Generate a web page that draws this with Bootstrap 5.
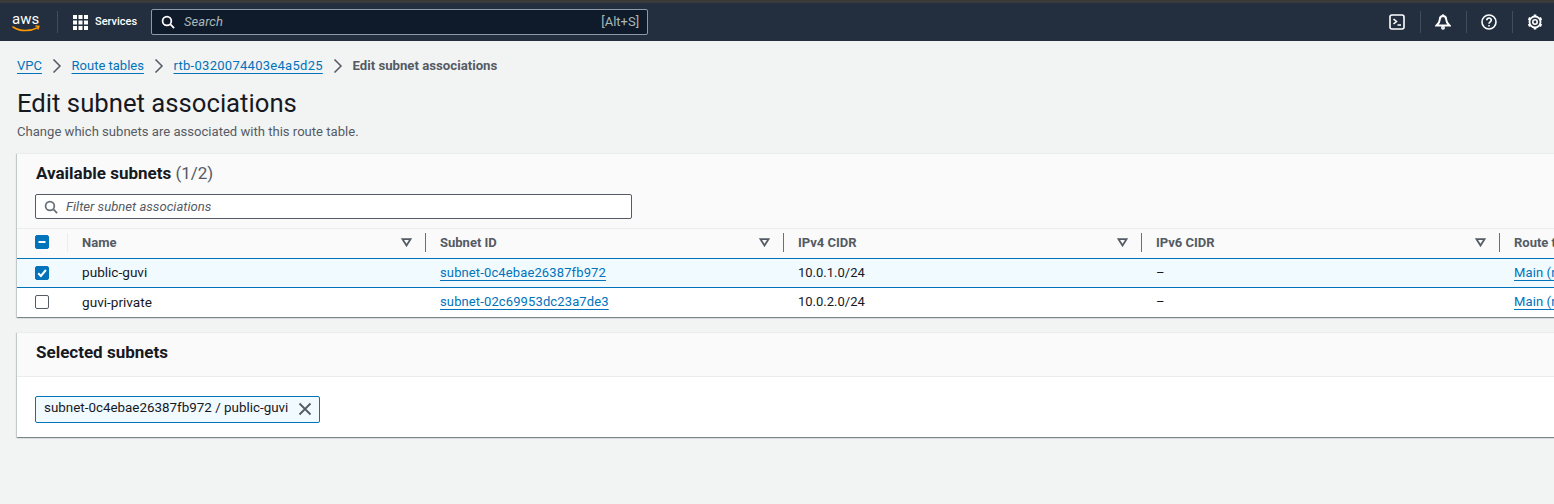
<!DOCTYPE html>
<html lang="en">
<head>
    <meta charset="UTF-8">
    <title>Edit subnet associations</title>
    <link href="https://cdn.jsdelivr.net/npm/bootstrap@5.3.2/dist/css/bootstrap.min.css" rel="stylesheet">
    <style>
        html, body { height: 100%; overflow: hidden; }
        body { background: #f2f3f3; font-family: Roboto, sans-serif; font-size: 13px; color: #16191f; }
        a { color: #0073bb; }

        .top-strip { height: 3px; background: #3a3a3a; }
        .aws-nav { height: 38px; background: #232f3e; padding: 0 9px 0 12px; flex-wrap: nowrap; }
        .aws-logo { width: 29px; height: 24px; }
        .nav-sep { width: 1px; height: 22px; background: #414d5c; }
        .svc-btn { color: #fff; font-size: 11px; font-weight: 500; gap: 7px; margin: 0 14px 0 15px; }
        .grid-icon { width: 15px; height: 15px; }
        .top-search { width: 497px; height: 26px; background: #0f1b2a; border: 1px solid #8d99a8; border-radius: 2px; padding: 0 8px 0 9px; color: #aab7b8; }
        .top-search em { margin-left: 9px; }
        .nav-icons { margin-left: auto; }
        .nav-icons .sep { width: 1px; height: 22px; background: #414d5c; }
        .nav-icons svg { width: 16px; height: 16px; margin: 0 14.5px; }
        .nav-icons svg:last-child { margin-right: 2px; }

        .page-body { padding: 0 0 0 17px; }
        .crumbs { margin: 16px 0 0; height: 18px; align-items: center; }
        .crumbs a { text-decoration-thickness: 1px; text-underline-offset: 3px; }
        .crumbs svg { width: 14px; height: 14px; margin: 0 7.8px; }
        .crumbs .id-link { letter-spacing: .28px; }
        .crumb-now { color: #545b64; font-weight: 700; font-size: 13.2px; }
        .page-title { font-size: 25.7px; font-weight: 400; line-height: 30px; margin: 13px 0 0; color: #16191f; }
        .page-sub { color: #545b64; line-height: 16px; margin: 6px 0 0; font-size: 13.08px; }

        .aws-card { width: 1600px; border: 0; border-top: 1px solid #eaeded; border-radius: 0; box-shadow: 0 1px 1px 0 rgba(0,28,36,.3), 1px 1px 1px 0 rgba(0,28,36,.15), -1px 1px 1px 0 rgba(0,28,36,.15); background: #fff; }
        .subnets-card { margin-top: 13px; height: 164px; }
        .selected-card { margin-top: 15px; height: 105px; }
        .aws-head { background: #fafafa; border-bottom: 1px solid #eaeded; border-radius: 0 !important; padding: 0 18px; }
        .subnets-card .aws-head { height: 75px; padding-top: 9px; }
        .selected-card .aws-head { height: 44px; display: flex; align-items: center; padding-bottom: 6px; }
        .card-name { font-size: 17px; font-weight: 700; line-height: 20px; margin-left: 1px; }
        .card-name span { font-weight: 400; color: #545b64; }
        .filter-box { width: 597px; height: 25px; margin-top: 11px; background: #fff; border: 1px solid #545b64; border-radius: 2px; padding: 0 8px; color: #545b64; font-size: 13.1px; }
        .filter-box em { margin-left: 8px; }

        .subnet-table { table-layout: fixed; width: 1600px; margin: 0; font-size: 13px; }
        .subnet-table th, .subnet-table td { padding: 0 0 0 15px; vertical-align: middle; border: 0; white-space: nowrap; }
        .subnet-table thead th { height: 29px; background: #fafafa; color: #545b64; font-weight: 700; padding-bottom: 2px; }
        .subnet-table tbody td { height: 29px; color: #16191f; }
        .subnet-table tr.row-selected td { background: #f1faff; border-top: 1px solid #0073bb; border-bottom: 1px solid #0073bb; }
        .subnet-table .col-check { width: 50px; padding-left: 18px; }
        .subnet-table .col-data { width: 358px; }
        .subnet-table a { text-underline-offset: 3px; letter-spacing: .125px; }
        .subnet-table .name-cell { font-size: 13.6px; }
        .head-cell { height: 19px; padding-right: 13px; }
        .head-cell svg { width: 11px; height: 9px; }
        .head-divider { border-left: 1px solid #687078; height: 19px; margin-left: -15px; padding-left: 14px; }
        .first-divider { border-left: 1px solid #eaeded; height: 19px; margin-left: -15px; padding-left: 14px; }

        .tick { width: 14px; height: 14px; margin: 0; display: block; border: 1px solid #545b64; border-radius: 2px; background: #fff; }
        .tick.on { background: #0073bb; border-color: #0073bb; }
        .tick svg { display: block; width: 12px; height: 12px; }

        .chip { margin: 19px 0 0 18px; width: 285px; height: 27px; border: 1px solid #0073bb; border-radius: 2px; background: #f1faff; padding: 0 7px 2px 8px; font-size: 13.4px; }
        .chip svg { width: 14px; height: 14px; }
    </style>
</head>
<body>

<div class="top-strip"></div>

<nav class="navbar aws-nav d-flex align-items-center">
    <svg class="aws-logo" viewBox="0 0 29 24">
        <text x="0" y="14" fill="#fff" font-family="Roboto, sans-serif" font-size="15">aws</text>
        <path d="M1 17c7 4.600 17 4.600 25 .6" fill="none" stroke="#ff9900" stroke-width="1.600" stroke-linecap="round"/>
        <path d="M23.500 16l3.500.4-1.200 3.200" fill="none" stroke="#ff9900" stroke-width="1.300"/>
    </svg>
    <div class="nav-sep ms-3"></div>
    <div class="svc-btn d-flex align-items-center">
        <svg class="grid-icon" viewBox="0 0 15 15" fill="#fff">
            <rect x="0" y="0" width="4" height="4"/><rect x="5.500" y="0" width="4" height="4"/><rect x="11" y="0" width="4" height="4"/>
            <rect x="0" y="5.500" width="4" height="4"/><rect x="5.500" y="5.500" width="4" height="4"/><rect x="11" y="5.500" width="4" height="4"/>
            <rect x="0" y="11" width="4" height="4"/><rect x="5.500" y="11" width="4" height="4"/><rect x="11" y="11" width="4" height="4"/>
        </svg>
        <span>Services</span>
    </div>
    <div class="top-search d-flex align-items-center">
        <svg width="14" height="14" viewBox="0 0 16 16" fill="none" stroke="#fff" stroke-width="2"><circle cx="6.800" cy="6.800" r="5"/><path d="M10.500 10.500L15 15"/></svg>
        <em>Search</em>
        <span class="ms-auto">[Alt+S]</span>
    </div>
    <div class="nav-icons d-flex align-items-center">
        <svg viewBox="0 0 16 16" fill="none" stroke="#fff" stroke-width="1.600"><rect x="1" y="1" width="14" height="14" rx="2"/><path d="M4.500 5l3 2.500-3 2.500M8.500 11h3.500"/></svg>
        <div class="sep"></div>
        <svg viewBox="0 0 16 16" fill="none" stroke="#fff" stroke-width="2"><path d="M8 2c-2 0-3.200 1.500-3.200 3.600 0 2.300-1 3.800-3.300 5.900h13c-2.300-2.100-3.300-3.600-3.300-5.900C11.200 3.500 10 2 8 2z"/><path d="M8 .3v1.500" stroke-width="1.600"/><circle cx="8" cy="13.800" r="1.200" stroke-width="1.500"/></svg>
        <div class="sep"></div>
        <svg viewBox="0 0 16 16" fill="none" stroke="#fff" stroke-width="1.600"><circle cx="8" cy="8" r="7"/><path d="M5.800 6.300c0-3 4.500-3 4.500-.2 0 1.700-2.300 1.700-2.300 3.600"/><path d="M8 11v1.500"/></svg>
        <div class="sep"></div>
        <svg viewBox="0 0 16 16" fill="none" stroke="#fff"><circle cx="8" cy="8" r="2.200" stroke-width="1.600"/><circle cx="8" cy="8" r="5.500" stroke-width="1.800"/><path d="M8 .5v2.500M8 13v2.500M1.500 4.250l2.200 1.250M12.300 10.500l2.200 1.250M1.500 11.750l2.200-1.250M12.300 5.500l2.200-1.250" stroke-width="2.600"/></svg>
    </div>
</nav>

<div class="page-body">
    <div class="crumbs d-flex">
        <a href="#">VPC</a>
        <svg viewBox="0 0 14 14" fill="none" stroke="#545b64" stroke-width="1.500"><path d="M3.500 .5L10 7l-6.500 6.500"/></svg>
        <a href="#">Route tables</a>
        <svg viewBox="0 0 14 14" fill="none" stroke="#545b64" stroke-width="1.500"><path d="M3.500 .5L10 7l-6.500 6.500"/></svg>
        <a class="id-link" href="#">rtb-0320074403e4a5d25</a>
        <svg viewBox="0 0 14 14" fill="none" stroke="#545b64" stroke-width="1.500"><path d="M3.500 .5L10 7l-6.500 6.500"/></svg>
        <span class="crumb-now">Edit subnet associations</span>
    </div>

    <h1 class="page-title">Edit subnet associations</h1>
    <p class="page-sub">Change which subnets are associated with this route table.</p>

    <div class="card aws-card subnets-card">
        <div class="card-header aws-head">
            <div class="card-name">Available subnets <span>(1/2)</span></div>
            <div class="filter-box d-flex align-items-center">
                <svg width="14" height="14" viewBox="0 0 16 16" fill="none" stroke="#687078" stroke-width="2"><circle cx="6.800" cy="6.800" r="5"/><path d="M10.500 10.500L15 15"/></svg>
                <em>Filter subnet associations</em>
            </div>
        </div>
        <table class="table subnet-table">
            <thead>
            <tr>
                <th class="col-check"><div class="tick on"><svg viewBox="0 0 12 12"><path d="M2.500 6h7" stroke="#fff" stroke-width="2"/></svg></div></th>
                <th class="col-data"><div class="first-divider head-cell d-flex align-items-center justify-content-between">Name<svg viewBox="0 0 11 9" fill="none" stroke="#545b64" stroke-width="1.800"><path d="M1.500 1.200h8L5.500 7.500z"/></svg></div></th>
                <th class="col-data"><div class="head-divider head-cell d-flex align-items-center justify-content-between">Subnet ID<svg viewBox="0 0 11 9" fill="none" stroke="#545b64" stroke-width="1.800"><path d="M1.500 1.200h8L5.500 7.500z"/></svg></div></th>
                <th class="col-data"><div class="head-divider head-cell d-flex align-items-center justify-content-between">IPv4 CIDR<svg viewBox="0 0 11 9" fill="none" stroke="#545b64" stroke-width="1.800"><path d="M1.500 1.200h8L5.500 7.500z"/></svg></div></th>
                <th class="col-data"><div class="head-divider head-cell d-flex align-items-center justify-content-between">IPv6 CIDR<svg viewBox="0 0 11 9" fill="none" stroke="#545b64" stroke-width="1.800"><path d="M1.500 1.200h8L5.500 7.500z"/></svg></div></th>
                <th><div class="head-divider head-cell d-flex align-items-center">Route table</div></th>
            </tr>
            </thead>
            <tbody>
            <tr class="row-selected">
                <td class="col-check"><div class="tick on"><svg viewBox="0 0 12 12" fill="none"><path d="M2.200 6.200l2.700 2.800 5-6" stroke="#fff" stroke-width="2"/></svg></div></td>
                <td class="name-cell">public-guvi</td>
                <td><a href="#">subnet-0c4ebae26387fb972</a></td>
                <td>10.0.1.0/24</td>
                <td>–</td>
                <td><a href="#">Main (rtb-0320074403e4a5d25)</a></td>
            </tr>
            <tr>
                <td class="col-check"><div class="tick"></div></td>
                <td class="name-cell">guvi-private</td>
                <td><a href="#">subnet-02c69953dc23a7de3</a></td>
                <td>10.0.2.0/24</td>
                <td>–</td>
                <td><a href="#">Main (rtb-0320074403e4a5d25)</a></td>
            </tr>
            </tbody>
        </table>
    </div>

    <div class="card aws-card selected-card">
        <div class="card-header aws-head">
            <div class="card-name">Selected subnets</div>
        </div>
        <div class="chip d-flex align-items-center justify-content-between">
            <span>subnet-0c4ebae26387fb972 / public-guvi</span>
            <svg viewBox="0 0 14 14" fill="none" stroke="#545b64" stroke-width="1.800"><path d="M1.500 1.500l11 11M12.500 1.500l-11 11"/></svg>
        </div>
    </div>
</div>

<script src="https://cdn.jsdelivr.net/npm/bootstrap@5.3.2/dist/js/bootstrap.bundle.min.js"></script>
</body>
</html>
